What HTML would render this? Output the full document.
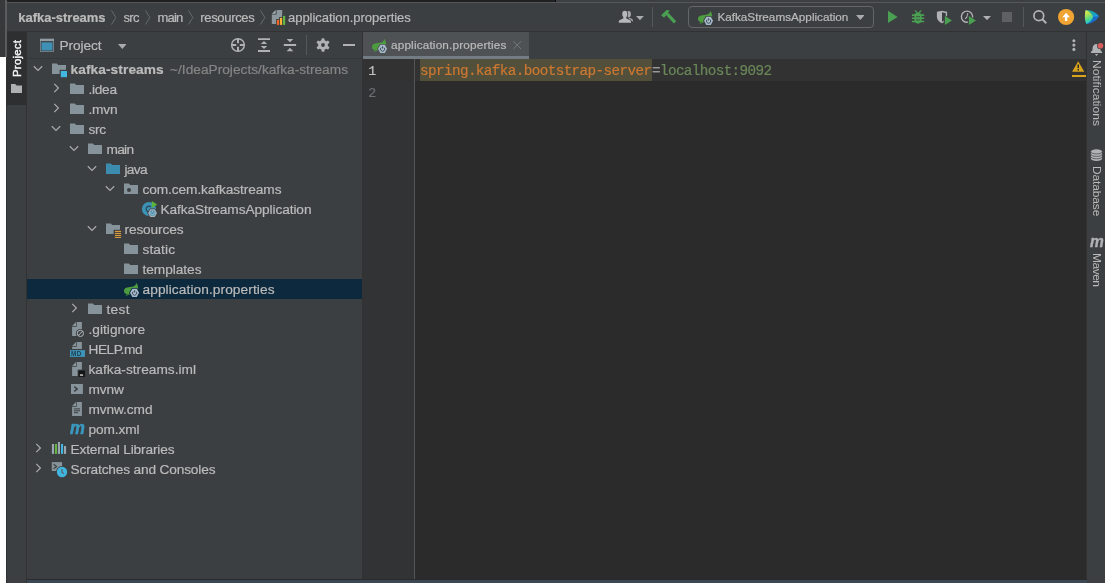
<!DOCTYPE html>
<html><head><meta charset="utf-8"><title>kafka-streams – application.properties</title>
<style>
html,body{margin:0;padding:0;}
body{width:1105px;height:583px;position:relative;overflow:hidden;background:#3c3f41;font-family:'Liberation Sans', sans-serif;}
#root{position:absolute;left:0;top:0;width:1105px;height:583px;overflow:hidden;will-change:transform;}
#root>div,#root>svg,#root>span{position:absolute;display:block;}
.t{white-space:pre;line-height:20px;height:20px;-webkit-text-stroke:0.200px currentColor;}
</style></head><body><div id="root">
<div style="left:0px;top:0px;width:1105px;height:583px;background:#3c3f41;"></div>
<div style="left:0px;top:0px;width:5px;height:57px;background:#38393b;"></div>
<div style="left:0px;top:57px;width:7px;height:526px;background:#ffffff;"></div>
<div style="left:5px;top:0px;width:2px;height:57px;background:#5a5c5e;"></div>
<div style="left:6px;top:57px;width:1px;height:526px;background:#2f3132;"></div>
<div style="left:7px;top:0px;width:549px;height:2px;background:#1f2021;"></div>
<div style="left:554.5px;top:0px;width:1.5px;height:2px;background:#0c0c0c;"></div>
<div style="left:556px;top:0px;width:549px;height:2px;background:#3d4042;"></div>
<div style="left:7px;top:2px;width:1098px;height:1px;background:#555759;"></div>
<div style="left:7px;top:31px;width:1098px;height:1px;background:#323232;"></div>
<div style="left:7px;top:32px;width:19px;height:551px;background:#3c3f41;"></div>
<div style="left:7px;top:32px;width:19px;height:73px;background:#2d2f30;"></div>
<div style="left:26px;top:32px;width:1px;height:551px;background:#323232;"></div>
<div style="left:27px;top:58px;width:336px;height:1px;background:#353739;"></div>
<div style="left:27px;top:279px;width:335px;height:20px;background:#0d293e;"></div>
<div style="left:362px;top:32px;width:1px;height:548px;background:#323232;"></div>
<div style="left:363px;top:32px;width:724px;height:27px;background:#3c3f41;"></div>
<div style="left:363px;top:59px;width:724px;height:521px;background:#2b2b2b;"></div>
<div style="left:363px;top:32px;width:166px;height:27px;background:#4e5254;"></div>
<div style="left:363px;top:56px;width:166px;height:3px;background:#737c84;"></div>
<div style="left:363px;top:58px;width:724px;height:1px;background:#323232;opacity:0"></div>
<div style="left:363px;top:59px;width:52px;height:521px;background:#313335;"></div>
<div style="left:414px;top:59px;width:1px;height:521px;background:#555555;"></div>
<div style="left:363px;top:59px;width:51px;height:22px;background:#323232;"></div>
<div style="left:415px;top:59px;width:672px;height:22px;background:#323232;"></div>
<div style="left:420px;top:59px;width:232px;height:22px;background:#52503a;"></div>
<div style="left:1087px;top:32px;width:18px;height:551px;background:#3c3f41;"></div>
<div style="left:1086px;top:32px;width:1px;height:551px;background:#323232;"></div>
<div style="left:27px;top:579px;width:1060px;height:1px;background:#2b2b2b;"></div>
<div style="left:27px;top:580px;width:1060px;height:3px;background:#3b4754;"></div>
<svg style="left:111.2px;top:10px;" width="5.9" height="15" viewBox="0 0 5.9 15"><path d="M0.5 0.5 L4.9 7.5 L0.5 14.5" fill="none" stroke="#676a6c" stroke-width="1"/></svg>
<svg style="left:145px;top:10px;" width="5.9" height="15" viewBox="0 0 5.9 15"><path d="M0.5 0.5 L4.9 7.5 L0.5 14.5" fill="none" stroke="#676a6c" stroke-width="1"/></svg>
<svg style="left:188.2px;top:10px;" width="5.9" height="15" viewBox="0 0 5.9 15"><path d="M0.5 0.5 L4.9 7.5 L0.5 14.5" fill="none" stroke="#676a6c" stroke-width="1"/></svg>
<svg style="left:259.8px;top:10px;" width="5.9" height="15" viewBox="0 0 5.9 15"><path d="M0.5 0.5 L4.9 7.5 L0.5 14.5" fill="none" stroke="#676a6c" stroke-width="1"/></svg>
<svg style="left:271px;top:9px;" width="15" height="17" viewBox="271 9 15 17"><path d="M276.600 9.900h5.600V24H271.800V14.600h4.800z" fill="#8c979e"/><path d="M271.800 13.700L275.700 9.900v3.800z" fill="#a3afb7"/>
<path d="M276.100 25V19h3v-2h3.100v-2h3.700v10z" fill="#3c3f41"/>
<rect x="276.900" y="19.900" width="2.200" height="5" fill="#f26522"/><rect x="279.950" y="17.900" width="2.200" height="7" fill="#f9b233"/><rect x="283" y="15.900" width="2.200" height="9" fill="#62b543"/></svg>
<svg style="left:618px;top:10px;" width="16" height="14" viewBox="618 10 16 14"><ellipse cx="628.600" cy="14.100" rx="2.300" ry="3.200" fill="#a9abad"/><path d="M628.500 17.600c1.500 0.800 4.300 1.200 4.500 2.800l-0.200 1.200-3.500-1.500z" fill="#a9abad"/>
<ellipse cx="624.800" cy="14.100" rx="3.400" ry="4.100" fill="#3c3f41"/><path d="M618.300 23v-1.800c0-1.700 3.200-2.300 4.600-3.100h3.800c1.400 0.800 5 1.400 5 3.100v1.800z" fill="#3c3f41"/>
<ellipse cx="624.800" cy="14.100" rx="2.600" ry="3.400" fill="#b5b7b9"/><path d="M618.800 22.700v-1.300c0-1.500 3-2 4.500-2.900v-1.500h3v1.500c1.500 0.900 4.700 1.400 4.700 2.900v1.300z" fill="#b5b7b9"/></svg>
<svg style="left:636.1px;top:15.9px;" width="7.9" height="4.2" viewBox="0 0 7.9 4.2"><path d="M0 0h7.9L3.95 4.2z" fill="#a8aaac"/></svg>
<div style="left:652px;top:7px;width:1px;height:20px;background:#555759;"></div>
<svg style="left:660px;top:9px;" width="18" height="16" viewBox="660 9 18 16"><path d="M661.200 15.300L666.500 10l3.300 0.500-5.700 7.200z" fill="#4a9f52"/><path d="M665.600 14.400l2.200-2.200L676.200 21.300 673.900 23.600z" fill="#4a9f52"/></svg>
<div style="left:688px;top:6px;width:186px;height:22px;border:1px solid #646667;border-radius:4px;box-sizing:border-box;"></div>
<svg style="left:697px;top:9px;" width="17" height="17" viewBox="0 0 17 17"><path d="M13.500 1.900C12.800 4.200 11 5.300 8.600 5.850 6.500 6.300 4.500 6.300 3.200 6.800 1.800 7.400 1 8.500 1 9.800c0 1.300 0.500 2.200 1.300 2.800 1 0.700 3 0.900 5 0.700 3-0.300 6-1.500 7.500-4 0.800-2 0.400-5-1.300-7.400z" fill="#4e9c40"/>
<path d="M2.800 14.300c1.500-0.200 2.500-0.800 3.500-1.700" stroke="#4e9c40" stroke-width="0.900" fill="none"/><path d="M6.05 11.85L8.80 6.90H14.30L17.05 11.85L14.30 16.80H8.80z" fill="#3c3f41"/><path d="M7.05 11.85L9.30 7.80H13.80L16.05 11.85L13.80 15.90H9.30z" fill="#a6b9c9"/><path d="M10.15 10.55a2.100 2.100 0 1 0 2.800 0" fill="none" stroke="#3a4754" stroke-width="0.900"/><path d="M11.55 9.25v2.300" stroke="#3a4754" stroke-width="0.900"/></svg>
<svg style="left:855.7px;top:15.3px;" width="8.6" height="5" viewBox="0 0 8.6 5"><path d="M0 0h8.6L4.3 5z" fill="#a8aaac"/></svg>
<svg style="left:887px;top:10px;" width="12" height="14" viewBox="887 10 12 14"><path d="M888 10.800L897.600 17 888 23.100z" fill="#4a9f52"/></svg>
<svg style="left:911px;top:9px;" width="14" height="16" viewBox="911 9 14 16"><path d="M915 10.400l2.200 2.600M921.100 10.400l-2.200 2.600" stroke="#4a9f52" stroke-width="1.200" fill="none"/>
<path d="M918 12.600c2.300 0 3.600 1.500 3.600 3.800v3.400c0 2.300-1.500 3.900-3.600 3.900s-3.600-1.600-3.600-3.900v-3.400c0-2.300 1.300-3.800 3.600-3.800z" fill="#4a9f52"/>
<path d="M912 15.100h12.200M912 18.300h12.200M912 21.500h12.200" stroke="#4a9f52" stroke-width="1.600"/>
<path d="M916 16.700h4M916 19.900h4" stroke="#3c3f41" stroke-width="0.800"/></svg>
<svg style="left:936px;top:10px;" width="17" height="16" viewBox="936 10 17 16"><path d="M936.900 11.700c2-0.100 3.600-0.400 5.100-0.900 1.500 0.500 3.100 0.800 5.100 0.900v5.300c0 3-2.500 5.200-5.100 6.200-2.600-1-5.100-3.200-5.100-6.200z" fill="#b0b2b4"/>
<path d="M942 12.200c1.100 0.300 2.300 0.600 3.700 0.700v4.300c0 2-1.700 3.500-3.700 4.500z" fill="#3c3f41"/>
<path d="M943.800 14.500v11.500l9.200-5.750z" fill="#3c3f41"/><path d="M944.900 16.100v8.800l7.100-4.400z" fill="#4a9f52"/></svg>
<svg style="left:960px;top:10px;" width="17" height="16" viewBox="960 10 17 16"><circle cx="967" cy="16.700" r="5.600" fill="none" stroke="#b0b2b4" stroke-width="1.400"/>
<path d="M967.800 13.200l-0.800 3.700-1.800 2" stroke="#b0b2b4" stroke-width="1.100" fill="none"/>
<path d="M967.800 14.500v11.500l9.200-5.750z" fill="#3c3f41"/><path d="M968.900 16.100v8.800l7.100-4.400z" fill="#4a9f52"/></svg>
<svg style="left:983px;top:15.9px;" width="8" height="4.1" viewBox="0 0 8 4.1"><path d="M0 0h8L4.0 4.1z" fill="#b0b2b4"/></svg>
<div style="left:1002px;top:12px;width:10px;height:10px;background:#5e6061;"></div>
<div style="left:1023px;top:7px;width:1px;height:20px;background:#555759;"></div>
<svg style="left:1032px;top:9px;" width="16" height="16" viewBox="1032 9 16 16"><circle cx="1038.800" cy="15.800" r="4.900" fill="none" stroke="#b1b3b5" stroke-width="1.700"/><path d="M1042.300 19.300l4 3.900" stroke="#b1b3b5" stroke-width="2"/></svg>
<svg style="left:1057px;top:8px;" width="18" height="18" viewBox="1057 8 18 18"><circle cx="1066.100" cy="17" r="8.100" fill="#f0a432"/><path d="M1066.100 12.800L1062.300 17.200h2.600v3.800h2.400v-3.800h2.600z" fill="#fff"/></svg>
<svg style="left:1084px;top:9px;" width="16" height="16" viewBox="1084 9 16 16"><defs><linearGradient id="lg1" x1="0.200" y1="0" x2="0.500" y2="1"><stop offset="0" stop-color="#f6ec3c"/><stop offset="0.400" stop-color="#9adf60"/><stop offset="0.750" stop-color="#3bd3a0"/><stop offset="1" stop-color="#1cb9e8"/></linearGradient>
<linearGradient id="lg2" x1="0" y1="0" x2="1" y2="0.700"><stop offset="0" stop-color="#2bb673"/><stop offset="0.500" stop-color="#1aa6a6"/><stop offset="1" stop-color="#1a98e0"/></linearGradient></defs>
<path d="M1085.600 9.900C1091 10 1096.500 12.500 1098.900 16.300 1097 20.500 1092 23.500 1086.300 24.100 1084.600 20 1084.500 14 1085.600 9.900z" fill="#1a6cc8"/>
<path d="M1085.600 9.900C1091 10 1096.500 12.500 1098.900 16.300L1093 16.700C1092 14 1089 11.300 1085.600 9.900z" fill="url(#lg2)"/>
<path d="M1085.600 9.900C1089.500 11.300 1092.300 14 1093.100 16.700 1092.500 19.700 1089.800 22.600 1086.300 24.100 1084.600 20 1084.500 14 1085.600 9.900z" fill="url(#lg1)"/></svg>
<span style="left:8.600px;top:77.400px;width:38px;height:16px;line-height:16px;font-size:11.500px;color:#f4f4f4;white-space:pre;transform-origin:0 0;transform:rotate(-90deg);font-family:'Liberation Sans', sans-serif;letter-spacing:0.200px;-webkit-text-stroke:0.400px #f4f4f4;" id="lproj">Project</span>
<svg style="left:11px;top:84px;" width="11" height="9" viewBox="0 0 11 9"><path d="M0 0h4.200l1.400 1.600H11V9H0z" fill="#aeb0b2"/></svg>
<svg style="left:39px;top:38px;" width="16" height="15" viewBox="39 38 16 15"><rect x="40" y="38.800" width="14" height="13.100" fill="#7f8b92"/><rect x="40" y="38.800" width="14" height="2.300" fill="#909da5"/><rect x="40.800" y="41.100" width="12.400" height="10" fill="#3c3f41"/><rect x="41.500" y="42.300" width="11" height="8.200" fill="#3e90b5"/></svg>
<svg style="left:117.7px;top:43.8px;" width="8.6" height="4.9" viewBox="0 0 8.6 4.9"><path d="M0 0h8.6L4.3 4.9z" fill="#a8aaac"/></svg>
<svg style="left:230px;top:37px;" width="16" height="16" viewBox="230 37 16 16"><circle cx="238" cy="45" r="6.350" fill="none" stroke="#afb1b3" stroke-width="1.500"/><path d="M238 38.500v4.700M238 46.800v4.700M231.500 45h4.700M239.800 45h4.700" stroke="#afb1b3" stroke-width="2"/></svg>
<svg style="left:257px;top:37px;" width="14" height="16" viewBox="257 37 14 16"><path d="M258 39.100h12M258 51h12" stroke="#afb1b3" stroke-width="1.900"/><path d="M264 41L267.200 44.100H260.800zM264 49L267.200 45.900H260.800z" fill="#afb1b3"/></svg>
<svg style="left:283px;top:37px;" width="14" height="16" viewBox="283 37 14 16"><path d="M283.800 45h12.300" stroke="#afb1b3" stroke-width="2"/><path d="M290 42.200L293.300 38.900H286.700zM290 47.700L293.300 51.200H286.700z" fill="#afb1b3"/></svg>
<div style="left:306px;top:35px;width:1px;height:20px;background:#555759;"></div>
<svg style="left:316px;top:38px;" width="14" height="14" viewBox="316 38 14 14"><g fill="#afb1b3"><circle cx="323" cy="45" r="4.900"/><rect x="321.500" y="38.200" width="3" height="13.600" rx="0.800"/><rect x="321.500" y="38.200" width="3" height="13.600" rx="0.800" transform="rotate(60 323 45)"/><rect x="321.500" y="38.200" width="3" height="13.600" rx="0.800" transform="rotate(120 323 45)"/></g><circle cx="323" cy="45" r="1.900" fill="#3c3f41"/></svg>
<div style="left:343px;top:44px;width:12px;height:2px;background:#afb1b3;"></div>
<svg style="left:33.1px;top:65.0px;" width="10" height="7" viewBox="0 0 10 7"><path d="M0.800 1.300L5 5.400 9.200 1.300" fill="none" stroke="#a9abad" stroke-width="1.200"/></svg>
<svg style="left:51px;top:61px;overflow:visible;" width="16" height="16" viewBox="0 0 16 16"><path d="M1 2.400h4.800L7.200 4H15V13H1z" fill="#87939a"/><rect x="8.600" y="8.800" width="8" height="8" fill="#3c3f41"/><rect x="9.800" y="10" width="6.200" height="6.200" fill="#40b6e0"/></svg>
<svg style="left:52.6px;top:83.3px;" width="7" height="10" viewBox="0 0 7 10"><path d="M1.300 0.800L5.400 5 1.300 9.200" fill="none" stroke="#a9abad" stroke-width="1.200"/></svg>
<svg style="left:69px;top:81px;" width="16" height="16" viewBox="0 0 16 16"><path d="M1 2.400h4.800L7.200 4H15V13H1z" fill="#87939a"/></svg>
<svg style="left:52.6px;top:103.3px;" width="7" height="10" viewBox="0 0 7 10"><path d="M1.300 0.800L5.400 5 1.300 9.200" fill="none" stroke="#a9abad" stroke-width="1.200"/></svg>
<svg style="left:69px;top:101px;" width="16" height="16" viewBox="0 0 16 16"><path d="M1 2.400h4.800L7.200 4H15V13H1z" fill="#87939a"/></svg>
<svg style="left:51.1px;top:125.0px;" width="10" height="7" viewBox="0 0 10 7"><path d="M0.800 1.300L5 5.400 9.200 1.300" fill="none" stroke="#a9abad" stroke-width="1.200"/></svg>
<svg style="left:69px;top:121px;" width="16" height="16" viewBox="0 0 16 16"><path d="M1 2.400h4.800L7.200 4H15V13H1z" fill="#87939a"/></svg>
<svg style="left:69.10000000000001px;top:145.0px;" width="10" height="7" viewBox="0 0 10 7"><path d="M0.800 1.300L5 5.400 9.200 1.300" fill="none" stroke="#a9abad" stroke-width="1.200"/></svg>
<svg style="left:87px;top:141px;" width="16" height="16" viewBox="0 0 16 16"><path d="M1 2.400h4.800L7.200 4H15V13H1z" fill="#87939a"/></svg>
<svg style="left:87.10000000000001px;top:165.0px;" width="10" height="7" viewBox="0 0 10 7"><path d="M0.800 1.300L5 5.400 9.200 1.300" fill="none" stroke="#a9abad" stroke-width="1.200"/></svg>
<svg style="left:105px;top:161px;" width="16" height="16" viewBox="0 0 16 16"><path d="M1 2.400h4.800L7.200 4H15V13H1z" fill="#3c8cb0"/></svg>
<svg style="left:105.10000000000001px;top:185.0px;" width="10" height="7" viewBox="0 0 10 7"><path d="M0.800 1.300L5 5.400 9.200 1.300" fill="none" stroke="#a9abad" stroke-width="1.200"/></svg>
<svg style="left:123px;top:181px;" width="16" height="16" viewBox="0 0 16 16"><path d="M1 2.400h4.800L7.200 4H15V13H1z" fill="#87939a"/><circle cx="6" cy="8.900" r="2" fill="#3c3f41"/></svg>
<svg style="left:141px;top:200px;overflow:visible;" width="18" height="18" viewBox="0 -1 18 18"><circle cx="8" cy="8" r="7.100" fill="#3d93b5"/>
<path d="M10 9.900a2.800 2.800 0 1 1 0-3.800" fill="none" stroke="#284655" stroke-width="1.200"/>
<path d="M10.800 -0.100v7L16.200 3.400z" fill="#5cb53a"/>
<path d="M6.25 12.1L8.90 7.40H14.20L16.85 12.1L14.20 16.80H8.90z" fill="#3c3f41"/><path d="M7.10 12.1L9.33 8.20H13.78L16.00 12.1L13.78 16.00H9.33z" fill="#a3b3c0"/><path d="M8.55 12.1L10.05 9.45H13.05L14.55 12.1L13.05 14.75H10.05z" fill="#4390ad"/>
<path d="M10.05 11.2a1.700 1.700 0 1 0 3 0" fill="none" stroke="#b4c3cf" stroke-width="0.900"/><path d="M11.55 9.8v1.600" stroke="#b4c3cf" stroke-width="0.800"/></svg>
<svg style="left:87.10000000000001px;top:225.0px;" width="10" height="7" viewBox="0 0 10 7"><path d="M0.800 1.300L5 5.400 9.200 1.300" fill="none" stroke="#a9abad" stroke-width="1.200"/></svg>
<svg style="left:105px;top:221px;overflow:visible;" width="16" height="16" viewBox="0 0 16 16"><path d="M1 2.400h4.800L7.200 4H15V13H1z" fill="#87939a"/><rect x="8.600" y="8.800" width="8" height="9" fill="#3c3f41"/><path d="M9.900 10.400h6.200M9.900 12.400h6.200M9.900 14.400h6.200M9.900 16.400h6.200" stroke="#eca63a" stroke-width="1"/></svg>
<svg style="left:123px;top:241px;" width="16" height="16" viewBox="0 0 16 16"><path d="M1 2.400h4.800L7.200 4H15V13H1z" fill="#87939a"/></svg>
<svg style="left:123px;top:261px;" width="16" height="16" viewBox="0 0 16 16"><path d="M1 2.400h4.800L7.200 4H15V13H1z" fill="#87939a"/></svg>
<svg style="left:123px;top:281px;" width="17" height="17" viewBox="0 0 17 17"><path d="M13.500 1.900C12.800 4.200 11 5.300 8.600 5.850 6.500 6.300 4.500 6.300 3.200 6.800 1.800 7.400 1 8.500 1 9.800c0 1.300 0.500 2.200 1.300 2.800 1 0.700 3 0.900 5 0.700 3-0.300 6-1.500 7.500-4 0.800-2 0.400-5-1.300-7.400z" fill="#4e9c40"/>
<path d="M2.800 14.300c1.500-0.200 2.500-0.800 3.500-1.700" stroke="#4e9c40" stroke-width="0.900" fill="none"/><path d="M6.05 11.85L8.80 6.90H14.30L17.05 11.85L14.30 16.80H8.80z" fill="#0d293e"/><path d="M7.05 11.85L9.30 7.80H13.80L16.05 11.85L13.80 15.90H9.30z" fill="#a6b9c9"/><path d="M10.15 10.55a2.100 2.100 0 1 0 2.800 0" fill="none" stroke="#3a4754" stroke-width="0.900"/><path d="M11.55 9.25v2.300" stroke="#3a4754" stroke-width="0.900"/></svg>
<svg style="left:70.60000000000001px;top:303.3px;" width="7" height="10" viewBox="0 0 7 10"><path d="M1.300 0.800L5.400 5 1.300 9.200" fill="none" stroke="#a9abad" stroke-width="1.200"/></svg>
<svg style="left:87px;top:301px;" width="16" height="16" viewBox="0 0 16 16"><path d="M1 2.400h4.800L7.200 4H15V13H1z" fill="#87939a"/></svg>
<svg style="left:69px;top:321px;overflow:visible;" width="17" height="17" viewBox="0 0 17 17"><path d="M7.700 1.100H12.900V15H3.100V5.800H7.700z" fill="#87939a"/><path d="M3.100 5L7 1.100V5z" fill="#87939a"/><circle cx="11.400" cy="12.400" r="4.500" fill="#3c3f41"/><circle cx="11.400" cy="12.400" r="3.100" fill="none" stroke="#b3bdc4" stroke-width="1"/><path d="M9.300 14.500l4.200-4.200" stroke="#b3bdc4" stroke-width="1"/></svg>
<svg style="left:69px;top:341px;" width="17" height="17" viewBox="0 0 17 17"><path d="M7.700 1.100H12.900V8H3.100V5.800H7.700z" fill="#87939a"/><path d="M3.100 5L7 1.100V5z" fill="#87939a"/><rect x="1" y="9.100" width="15" height="6.800" fill="#3d94b8"/><text x="2" y="14.900" font-size="6.300" font-family="Liberation Sans, sans-serif" fill="#1f3b4b" font-weight="bold" letter-spacing="0.500">MD</text></svg>
<svg style="left:69px;top:361px;overflow:visible;" width="17" height="17" viewBox="0 0 17 17"><path d="M7.700 1.100H12.900V15H3.100V5.800H7.700z" fill="#87939a"/><path d="M3.100 5L7 1.100V5z" fill="#87939a"/><rect x="8.600" y="8.600" width="8" height="8" fill="#3c3f41"/><rect x="9.500" y="9.500" width="6.500" height="6.400" fill="#151515"/><rect x="10.900" y="13.400" width="3.200" height="1.300" fill="#e0e0e0"/></svg>
<svg style="left:69px;top:381px;" width="16" height="16" viewBox="0 0 16 16"><rect x="2" y="3" width="11.900" height="10" fill="#87939a"/><path d="M5.200 5.600L8.200 8l-3 2.400" fill="none" stroke="#3c3f41" stroke-width="1.500"/></svg>
<svg style="left:69px;top:401px;" width="16" height="16" viewBox="0 0 16 16"><path d="M7.700 1.100H12.900V15H3.100V5.800H7.700z" fill="#87939a"/><path d="M3.100 5L7 1.100V5z" fill="#87939a"/><path d="M4.900 7.900h6.100M4.900 9.800h6.100M4.900 11.700h4.200" stroke="#3c3f41" stroke-width="1"/></svg>
<span style="left:69.5px;top:418px;font-family:'Liberation Sans', sans-serif;font-style:italic;font-weight:bold;font-size:19px;line-height:20px;height:20px;color:#3b98bf;-webkit-text-stroke:0.600px #3b98bf;transform:scaleX(0.880);transform-origin:0 0;" id="pm">m</span>
<svg style="left:34.6px;top:443.3px;" width="7" height="10" viewBox="0 0 7 10"><path d="M1.300 0.800L5.400 5 1.300 9.200" fill="none" stroke="#a9abad" stroke-width="1.200"/></svg>
<svg style="left:51px;top:441px;" width="17" height="16" viewBox="0 0 17 16"><rect x="0.900" y="3" width="2.100" height="9.900" fill="#9aa7b0"/><rect x="3.900" y="3" width="2.100" height="9.900" fill="#62b543"/><rect x="6.900" y="1" width="2.100" height="11.900" fill="#9aa7b0"/><rect x="10" y="3" width="2.100" height="9.900" fill="#40b6e0"/><rect x="13" y="5" width="2.100" height="7.900" fill="#9aa7b0"/></svg>
<svg style="left:34.6px;top:463.3px;" width="7" height="10" viewBox="0 0 7 10"><path d="M1.300 0.800L5.400 5 1.300 9.200" fill="none" stroke="#a9abad" stroke-width="1.200"/></svg>
<svg style="left:51px;top:461px;overflow:visible;" width="18" height="18" viewBox="0 0 18 18"><rect x="0.800" y="1.100" width="10.300" height="8.900" fill="#87939a"/><path d="M2.600 3.200L5.600 5.500 2.600 7.800" fill="none" stroke="#3c3f41" stroke-width="1.100"/><circle cx="11" cy="11" r="6" fill="#3c3f41"/><circle cx="11" cy="11" r="5.200" fill="#3fb5e0"/><path d="M11 8v3.200l1.800 1.600" fill="none" stroke="#55656d" stroke-width="1.300"/></svg>
<svg style="left:371px;top:36.6px;" width="17" height="17" viewBox="0 0 17 17"><path d="M13.500 1.900C12.800 4.200 11 5.300 8.600 5.850 6.500 6.300 4.500 6.300 3.200 6.800 1.800 7.400 1 8.500 1 9.800c0 1.300 0.500 2.200 1.300 2.800 1 0.700 3 0.900 5 0.700 3-0.300 6-1.500 7.500-4 0.800-2 0.400-5-1.300-7.400z" fill="#4e9c40"/>
<path d="M2.800 14.300c1.500-0.200 2.500-0.800 3.500-1.700" stroke="#4e9c40" stroke-width="0.900" fill="none"/><path d="M6.05 11.85L8.80 6.90H14.30L17.05 11.85L14.30 16.80H8.80z" fill="#4e5254"/><path d="M7.05 11.85L9.30 7.80H13.80L16.05 11.85L13.80 15.90H9.30z" fill="#a6b9c9"/><path d="M10.15 10.55a2.100 2.100 0 1 0 2.800 0" fill="none" stroke="#3a4754" stroke-width="0.900"/><path d="M11.55 9.25v2.300" stroke="#3a4754" stroke-width="0.900"/></svg>
<svg style="left:512px;top:40px;" width="10" height="10" viewBox="512 40 10 10"><path d="M513.400 41.300l7.600 7.600M521 41.300l-7.600 7.600" stroke="#727b80" stroke-width="1"/></svg>
<svg style="left:1071px;top:38px;" width="6" height="14" viewBox="1071 38 6 14"><circle cx="1073.900" cy="40.700" r="1.550" fill="#b0b2b4"/><circle cx="1073.900" cy="45.100" r="1.550" fill="#b0b2b4"/><circle cx="1073.900" cy="49.400" r="1.550" fill="#b0b2b4"/></svg>
<svg style="left:1071px;top:61px;" width="14" height="12" viewBox="1071 61 14 12"><path d="M1078.200 61.300L1084.300 71.700H1072.100z" fill="#d9a41c"/><rect x="1077.500" y="64.500" width="1.500" height="3.600" fill="#2b2b2b"/><rect x="1077.500" y="69" width="1.500" height="1.500" fill="#2b2b2b"/></svg>
<div style="left:1072px;top:75px;width:14px;height:2.2px;background:#d9a41c;"></div>
<svg style="left:1090px;top:42px;" width="14" height="15" viewBox="1090 42 14 15"><path d="M1096.500 43.900c2.400 0 3.800 1.700 3.900 4.100l0.200 2.400 1.500 1.700v0.900h-11.200v-0.900l1.500-1.700 0.200-2.400c0.100-2.400 1.500-4.100 3.900-4.100z" fill="#b0b2b4"/><path d="M1094.900 54h3.200l-1.600 1.900z" fill="#b0b2b4"/><circle cx="1100.500" cy="45.800" r="3.500" fill="#3c3f41"/><circle cx="1100.500" cy="45.800" r="2.800" fill="#db5c5c"/></svg>
<span style="left:1103.8px;top:60.2px;height:16px;line-height:16px;font-size:12px;letter-spacing:0.05px;color:#bbbbbb;white-space:pre;transform-origin:0 0;transform:rotate(90deg) scale(1,0.900);font-family:'Liberation Sans', sans-serif;" class="v">Notifications</span>
<svg style="left:1090px;top:148px;" width="13" height="14" viewBox="1090 148 13 14"><path d="M1090.900 151.500a5.600 2.200 0 0 1 11.200 0v7.200a5.600 2.200 0 0 1-11.200 0z" fill="#b0b2b4"/><g fill="none" stroke="#3c3f41" stroke-width="0.700"><path d="M1090.700 151.700a5.800 2.200 0 0 0 11.600 0M1090.700 154.200a5.800 2.200 0 0 0 11.600 0M1090.700 156.600a5.800 2.200 0 0 0 11.600 0"/></g></svg>
<span style="left:1103.8px;top:166.1px;height:16px;line-height:16px;font-size:12px;letter-spacing:-0.15px;color:#bbbbbb;white-space:pre;transform-origin:0 0;transform:rotate(90deg) scale(1,0.900);font-family:'Liberation Sans', sans-serif;" class="v">Database</span>
<span style="left:1089.600px;top:230.500px;font-family:'Liberation Sans', sans-serif;font-style:italic;font-weight:bold;font-size:16.500px;line-height:20px;height:20px;color:#b0b2b4;-webkit-text-stroke:0.400px #b0b2b4;transform:scaleX(0.940);transform-origin:0 0;" id="rm">m</span>
<span style="left:1103.8px;top:253px;height:16px;line-height:16px;font-size:12px;letter-spacing:-0.5px;color:#bbbbbb;white-space:pre;transform-origin:0 0;transform:rotate(90deg) scale(1,0.900);font-family:'Liberation Sans', sans-serif;" class="v">Maven</span>
<span class="t" style="left:18.3px;top:8px;font-family:'Liberation Sans', sans-serif;font-size:13px;font-weight:bold;color:#bbbbbb;letter-spacing:-0.013px;">kafka-streams</span>
<span class="t" style="left:123.5px;top:8px;font-family:'Liberation Sans', sans-serif;font-size:13px;font-weight:normal;color:#bbbbbb;letter-spacing:-0.722px;">src</span>
<span class="t" style="left:157.4px;top:8px;font-family:'Liberation Sans', sans-serif;font-size:13px;font-weight:normal;color:#bbbbbb;letter-spacing:-0.762px;">main</span>
<span class="t" style="left:200.2px;top:8px;font-family:'Liberation Sans', sans-serif;font-size:13px;font-weight:normal;color:#bbbbbb;letter-spacing:-0.31px;">resources</span>
<span class="t" style="left:288px;top:8px;font-family:'Liberation Sans', sans-serif;font-size:13px;font-weight:normal;color:#bbbbbb;letter-spacing:-0.037px;">application.properties</span>
<span class="t" style="left:717.4px;top:7px;font-family:'Liberation Sans', sans-serif;font-size:11.75px;font-weight:normal;color:#bbbbbb;letter-spacing:-0.013px;">KafkaStreamsApplication</span>
<span class="t" style="left:59.4px;top:36px;font-family:'Liberation Sans', sans-serif;font-size:13.7px;font-weight:normal;color:#bbbbbb;letter-spacing:-0.068px;">Project</span>
<span class="t" style="left:70.5px;top:60px;font-family:'Liberation Sans', sans-serif;font-size:13.7px;font-weight:bold;color:#bbbbbb;letter-spacing:0.093px;">kafka-streams</span>
<span class="t" style="left:170px;top:60px;font-family:'Liberation Sans', sans-serif;font-size:13.7px;font-weight:normal;color:#858585;letter-spacing:0.013px;">~/IdeaProjects/kafka-streams</span>
<span class="t" style="left:88.5px;top:80px;font-family:'Liberation Sans', sans-serif;font-size:13.7px;font-weight:normal;color:#bbbbbb;letter-spacing:-0.297px;">.idea</span>
<span class="t" style="left:88.5px;top:100px;font-family:'Liberation Sans', sans-serif;font-size:13.7px;font-weight:normal;color:#bbbbbb;letter-spacing:-0.224px;">.mvn</span>
<span class="t" style="left:88.5px;top:120px;font-family:'Liberation Sans', sans-serif;font-size:13.7px;font-weight:normal;color:#bbbbbb;letter-spacing:-0.375px;">src</span>
<span class="t" style="left:106.5px;top:140px;font-family:'Liberation Sans', sans-serif;font-size:13.7px;font-weight:normal;color:#bbbbbb;letter-spacing:-0.724px;">main</span>
<span class="t" style="left:124.5px;top:160px;font-family:'Liberation Sans', sans-serif;font-size:13.7px;font-weight:normal;color:#bbbbbb;letter-spacing:-0.703px;">java</span>
<span class="t" style="left:142.5px;top:180px;font-family:'Liberation Sans', sans-serif;font-size:13.7px;font-weight:normal;color:#bbbbbb;letter-spacing:-0.09px;">com.cem.kafkastreams</span>
<span class="t" style="left:160.5px;top:200px;font-family:'Liberation Sans', sans-serif;font-size:13.7px;font-weight:normal;color:#bbbbbb;letter-spacing:-0.087px;">KafkaStreamsApplication</span>
<span class="t" style="left:124.5px;top:220px;font-family:'Liberation Sans', sans-serif;font-size:13.7px;font-weight:normal;color:#bbbbbb;letter-spacing:-0.139px;">resources</span>
<span class="t" style="left:142.5px;top:240px;font-family:'Liberation Sans', sans-serif;font-size:13.7px;font-weight:normal;color:#bbbbbb;letter-spacing:0.109px;">static</span>
<span class="t" style="left:142.5px;top:260px;font-family:'Liberation Sans', sans-serif;font-size:13.7px;font-weight:normal;color:#bbbbbb;letter-spacing:-0.043px;">templates</span>
<span class="t" style="left:142.5px;top:280px;font-family:'Liberation Sans', sans-serif;font-size:13.7px;font-weight:normal;color:#bbbbbb;letter-spacing:0.089px;">application.properties</span>
<span class="t" style="left:106.5px;top:300px;font-family:'Liberation Sans', sans-serif;font-size:13.7px;font-weight:normal;color:#bbbbbb;letter-spacing:0.312px;">test</span>
<span class="t" style="left:88.5px;top:320px;font-family:'Liberation Sans', sans-serif;font-size:13.7px;font-weight:normal;color:#bbbbbb;letter-spacing:0.021px;">.gitignore</span>
<span class="t" style="left:88.5px;top:340px;font-family:'Liberation Sans', sans-serif;font-size:13.7px;font-weight:normal;color:#bbbbbb;letter-spacing:-0.469px;">HELP.md</span>
<span class="t" style="left:88.5px;top:360px;font-family:'Liberation Sans', sans-serif;font-size:13.7px;font-weight:normal;color:#bbbbbb;letter-spacing:0.017px;">kafka-streams.iml</span>
<span class="t" style="left:88.5px;top:380px;font-family:'Liberation Sans', sans-serif;font-size:13.7px;font-weight:normal;color:#bbbbbb;letter-spacing:-0.083px;">mvnw</span>
<span class="t" style="left:88.5px;top:400px;font-family:'Liberation Sans', sans-serif;font-size:13.7px;font-weight:normal;color:#bbbbbb;letter-spacing:-0.094px;">mvnw.cmd</span>
<span class="t" style="left:88.5px;top:420px;font-family:'Liberation Sans', sans-serif;font-size:13.7px;font-weight:normal;color:#bbbbbb;letter-spacing:-0.12px;">pom.xml</span>
<span class="t" style="left:70.5px;top:440px;font-family:'Liberation Sans', sans-serif;font-size:13.7px;font-weight:normal;color:#bbbbbb;letter-spacing:-0.148px;">External Libraries</span>
<span class="t" style="left:70.5px;top:460px;font-family:'Liberation Sans', sans-serif;font-size:13.7px;font-weight:normal;color:#bbbbbb;letter-spacing:-0.161px;">Scratches and Consoles</span>
<span class="t" style="left:391px;top:35px;font-family:'Liberation Sans', sans-serif;font-size:11.75px;font-weight:normal;color:#bbbbbb;letter-spacing:0.171px;">application.properties</span>
<span class="t" style="left:368.3px;top:62px;font-family:'Liberation Mono', monospace;font-size:13.33px;font-weight:normal;color:#c0c0c0;letter-spacing:0px;">1</span>
<span class="t" style="left:368.3px;top:84px;font-family:'Liberation Mono', monospace;font-size:13.33px;font-weight:normal;color:#6c6f72;letter-spacing:0px;">2</span>
<span class="t" style="left:420px;top:61px;font-family:'Liberation Mono', monospace;font-size:14.3px;font-weight:normal;color:#cc7832;letter-spacing:-0.6px;">spring.kafka.bootstrap-server</span>
<span class="t" style="left:652px;top:61px;font-family:'Liberation Mono', monospace;font-size:14.3px;font-weight:normal;color:#9a9a9a;letter-spacing:0px;">=</span>
<span class="t" style="left:660px;top:61px;font-family:'Liberation Mono', monospace;font-size:14.3px;font-weight:normal;color:#6a8759;letter-spacing:-0.625px;">localhost:9092</span>
</div></body></html>
